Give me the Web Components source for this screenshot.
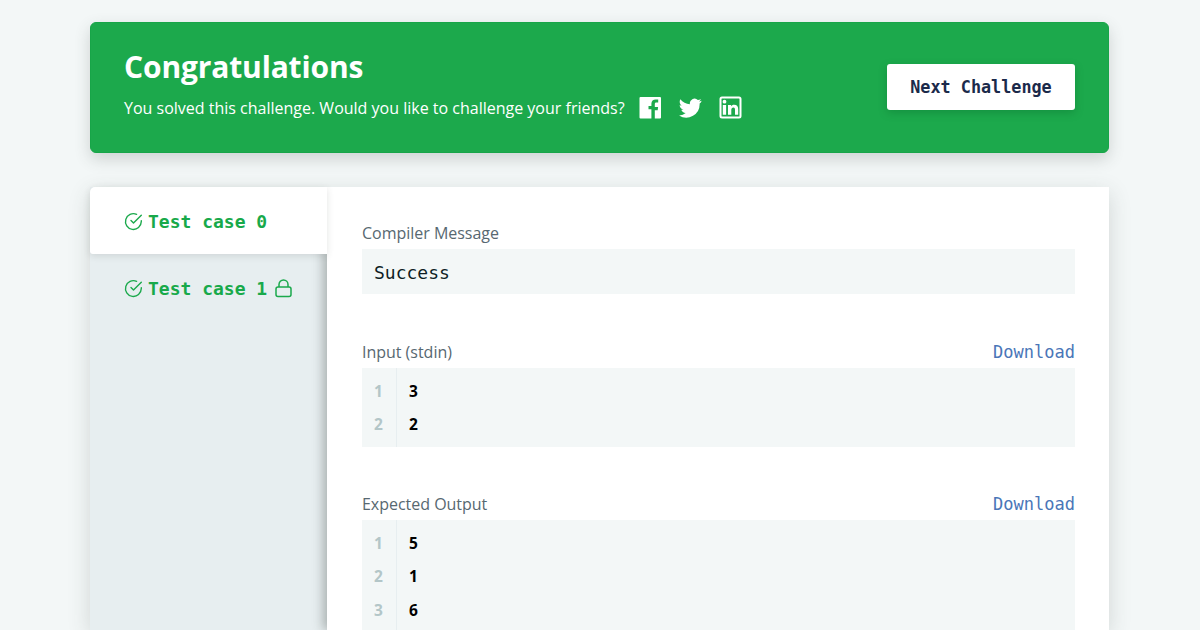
<!DOCTYPE html>
<html><head><meta charset="utf-8">
<style>
html,body{margin:0;padding:0;height:630px;overflow:hidden;background:#f3f7f7;font-family:"Open Sans",sans-serif}
body{display:flex;flex-direction:column;gap:34px;padding:22px 91px 0 90px;box-sizing:border-box}
</style></head><body>
<template id="banner-t"><style>
:host{display:flex;height:131px;box-sizing:border-box;background:#1ca94c;border:1px solid #17a548;border-radius:6px;box-shadow:0 6px 16px rgba(57,66,60,.2);align-items:center;justify-content:space-between;padding:0 33px}
h1{margin:0;font:700 30px/40px "Open Sans",sans-serif;color:#fff;letter-spacing:-.15px}
.l{display:flex;flex-direction:column;gap:9px;margin-top:-9px}
.s{display:flex;align-items:center;color:#fff;font:400 16px/24px "Open Sans",sans-serif}
.i{display:flex;align-items:center;gap:17px;margin-left:14px;margin-top:-1px}
svg{display:block}
.b{display:flex;align-items:center;justify-content:center;width:188px;height:46px;background:#fff;border-radius:3px;box-shadow:0 3px 8px rgba(0,80,30,.25);font:700 16.800px "DejaVu Sans Mono",monospace;color:#1b2a4a;margin-bottom:1px}
</style>
<div class="l"><h1>Congratulations</h1>
<div class="s"><span>You solved this challenge. Would you like to challenge your friends?</span><span class="i">
<svg width="23" height="23" viewBox="0 0 23 23"><path fill="#fff" d="M1.500 1H21a1 1 0 0 1 1 1v19.500a1 1 0 0 1-1 1h-5.200v-8.300h2.900l.4-3.200h-3.300V8c0-1 .3-1.600 1.700-1.600h1.700V3.500c-.4 0-1.400-.1-2.500-.1-2.600 0-4.300 1.500-4.300 4.300V10H9.500v3.200h2.900v9.300H1.500a1 1 0 0 1-1-1V2a1 1 0 0 1 1-1z"/></svg>
<svg width="23" height="23" viewBox="0 0 24 24"><path fill="#fff" d="M23.500 4.900c-.9.400-1.800.6-2.800.8 1-.6 1.800-1.500 2.100-2.700-.9.600-2 1-3.100 1.200A4.900 4.900 0 0 0 11.400 8.600C7.400 8.400 3.800 6.500 1.400 3.500c-1.300 2.200-.6 5.100 1.500 6.500-.8 0-1.500-.2-2.200-.6 0 2.400 1.700 4.400 3.900 4.900-.7.200-1.500.2-2.200.1.600 1.900 2.400 3.300 4.600 3.400A9.900 9.900 0 0 1 0 20.300a13.900 13.900 0 0 0 21.500-12.400c1-.7 1.800-1.600 2-3z"/></svg>
<svg width="23" height="23" viewBox="0 0 23 23"><path fill="#fff" fill-rule="evenodd" d="M3 .5h17a2.500 2.500 0 0 1 2.500 2.500v17a2.500 2.500 0 0 1-2.500 2.500H3A2.500 2.500 0 0 1 .5 20V3A2.500 2.500 0 0 1 3 .5zM3 2.500a.5.500 0 0 0-.5.5v17a.5.500 0 0 0 .5.500h17a.5.500 0 0 0 .5-.5V3a.5.500 0 0 0-.5-.5zM3.800 9h3.300v9.700H3.800zM5.500 3.800a1.900 1.900 0 1 1 0 3.800 1.900 1.900 0 0 1 0-3.800zM9 9h3.100v1.300c.5-.9 1.600-1.600 3-1.600 3 0 4.100 1.800 4.100 4.600v5.400H16v-4.800c0-1.300-.3-2.400-1.600-2.400s-2.100 1-2.100 2.400v4.800H9z"/></svg>
</span></div></div>
<div class="b">Next Challenge</div>
</template>
<template id="card-t"><style>
:host{display:flex;flex:1;min-height:0;background:#fff;border-radius:5px 0 0 0;box-shadow:0 6px 22px rgba(57,66,60,.18);position:relative}
.side{width:237px;flex:none;background:#e7eef0;display:flex;flex-direction:column}
.main{flex:1;min-width:0;background:#fff;padding:34px 34px 0 35px;box-shadow:-4px 0 10px rgba(57,66,60,.35);clip-path:inset(0 0 0 -20px);position:relative;overflow:hidden;display:flex;flex-direction:column}
</style><div class="side"><slot name="tabs"></slot></div><div class="main"><slot></slot></div>
</template>
<template id="tab-t"><style>
:host{display:flex;align-items:center;height:67px;box-sizing:border-box;padding:1px 0 0 33.500px;color:#18a94a;font:700 18px "DejaVu Sans Mono",monospace;position:relative;z-index:1}
:host([active]){background:#fff;border-radius:5px 0 0 3px;box-shadow:0 2px 7px rgba(57,66,60,.14)}
svg{display:block}
.c{margin-right:5.500px}
.k{margin-left:8px}
</style><svg class="c" width="19" height="19" viewBox="0 0 19 19" fill="none" stroke="#1ba94c" stroke-width="1.400" stroke-linecap="round" stroke-linejoin="round"><path d="M17.300 8.800v.8A7.900 7.900 0 1 1 12.600 2.300"/><path d="M17.300 3.200 9.500 11 7 8.500"/></svg><slot></slot><svg class="k" style="display:var(--lock,none)" width="17" height="19" viewBox="0 0 17 19" fill="none" stroke="#1ba94c" stroke-width="1.500" stroke-linejoin="round"><rect x="1" y="8" width="15" height="9.500" rx="2"/><path d="M4 8V5.500a4.500 4.500 0 0 1 9 0V8"/></svg>
</template>
<template id="sec-t"><style>
:host{display:block}
.h{display:flex;justify-content:space-between;align-items:baseline;height:28px;font:400 16px/24px "Open Sans",sans-serif;color:#576871;letter-spacing:-.02px}
.d{font:400 17px "DejaVu Sans Mono",monospace;color:#4a76b8;display:var(--dl,none);letter-spacing:0}
.body{background:#f3f7f7}
</style><div class="h"><span><slot name="label"></slot></span><span class="d">Download</span></div><div class="body"><slot></slot></div>
</template>
<template id="code-t"><style>
:host{display:grid;grid-template-columns:35px 1fr;padding:7px 0 5px;font:700 15.500px/33.300px "Open Sans",sans-serif;color:#000;background:#f3f7f7}
.n{border-right:1px solid #e7eef0;color:#b3c6c8;text-align:center;padding-right:1px;margin:-7px 0 -5px;padding-top:7px;padding-bottom:5px;white-space:pre-line}
.v{padding-left:12px;white-space:pre-line}
</style><div class="n" id="n"></div><div class="v" id="v"></div>
</template>
<x-banner></x-banner>
<x-card>
 <x-tab slot="tabs" active>Test case 0</x-tab>
 <x-tab slot="tabs" style="--lock:block">Test case 1</x-tab>
 <x-sec style="margin-bottom:46px"><span slot="label">Compiler Message</span><x-msg>Success</x-msg></x-sec>
 <x-sec style="--dl:inline;margin-bottom:45.400px"><span slot="label">Input (stdin)</span><x-code lines="3,2"></x-code></x-sec>
 <x-sec style="--dl:inline"><span slot="label">Expected Output</span><x-code lines="5,1,6"></x-code></x-sec>
</x-card>
<script>
function simple(name,id,init){customElements.define(name,class extends HTMLElement{constructor(){super();const r=this.attachShadow({mode:'open'});r.appendChild(document.getElementById(id).content.cloneNode(true));}connectedCallback(){init&&init(this)}})}
simple('x-banner','banner-t');simple('x-card','card-t');simple('x-tab','tab-t');simple('x-sec','sec-t');
simple('x-code','code-t',el=>{const a=el.getAttribute('lines').split(',');el.shadowRoot.getElementById('n').textContent=a.map((_,i)=>i+1).join('\n');el.shadowRoot.getElementById('v').textContent=a.join('\n')});
customElements.define('x-msg',class extends HTMLElement{constructor(){super();this.attachShadow({mode:'open'}).innerHTML='<style>:host{display:block;height:45px;box-sizing:border-box;padding:1px 12px 0;background:#f3f7f7;font:400 18px/45px "DejaVu Sans Mono",monospace;color:#0e1e25}</style><slot></slot>'}});
</script>
</body></html>
